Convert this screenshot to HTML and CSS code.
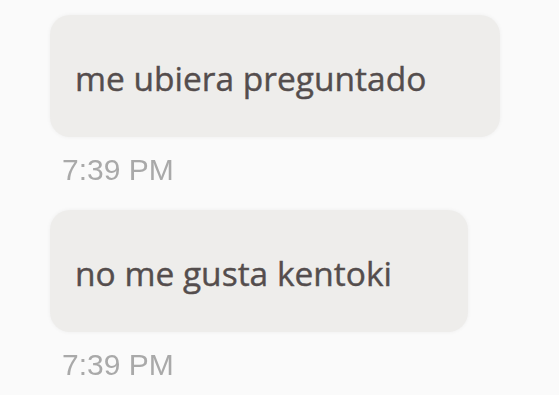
FILE: index.html
```html
<!DOCTYPE html>
<html>
<head>
    <title>Chat</title>
    <link rel="stylesheet" href="styles.css">
</head>
<body>
    <div class="thread">
        <div class="message">
            <div class="bubble bubble-wide">me ubiera preguntado</div>
            <div class="time">7:39 PM</div>
        </div>
        <div class="message">
            <div class="bubble bubble-short">no me gusta kentoki</div>
            <div class="time">7:39 PM</div>
        </div>
    </div>
</body>
</html>
```

FILE: styles.css
```css
* {
    margin: 0;
    padding: 0;
    box-sizing: border-box;
}

body {
    background: #fafafa;
    font-family: 'Open Sans', 'Noto Sans', sans-serif;
    width: 559px;
    height: 395px;
    overflow: hidden;
}

.thread {
    display: flex;
    flex-direction: column;
    gap: 23px;
    padding: 15px 0 0 50px;
}

.bubble {
    background: #eeedeb;
    border-radius: 20px;
    height: 122px;
    padding: 4px 0 0 25px;
    display: flex;
    align-items: center;
    color: #544d4d;
    font-size: 33.5px;
    -webkit-text-stroke: 0.4px #544d4d;
    box-shadow: 0 0 4px rgba(0, 0, 0, 0.05);
}

.bubble-wide {
    width: 450px;
}

.bubble-short {
    width: 418px;
}

/* Timestamps look soft in the original */
.time {
    margin: 16px 0 0 12px;
    font-family: 'Liberation Sans', Arial, sans-serif;
    font-size: 30px;
    line-height: 34px;
    color: #a9a9a9;
    filter: blur(0.6px);
}
```
